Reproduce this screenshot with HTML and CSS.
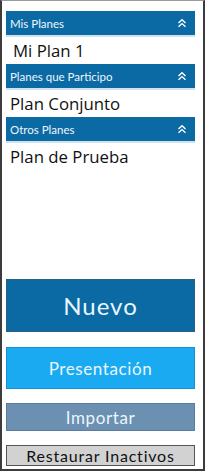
FILE: index.html
```html
<!DOCTYPE html>
<html lang="es">
<head>
<meta charset="utf-8">
<link rel="stylesheet" href="styles.css">
</head>
<body>
<div class="frame">
  <div class="section">
    <div class="header"><span>Mis Planes</span>
      <svg class="chev" viewBox="0 0 10 10" width="10" height="10"><path d="M1.5 5 L5 1.8 L8.5 5 M1.5 8.8 L5 5.6 L8.5 8.8" fill="none" stroke="#fff" stroke-width="1.4"/></svg>
    </div>
    <div class="item indent">Mi Plan 1</div>
  </div>
  <div class="section">
    <div class="header"><span>Planes que Participo</span>
      <svg class="chev" viewBox="0 0 10 10" width="10" height="10"><path d="M1.5 5 L5 1.8 L8.5 5 M1.5 8.8 L5 5.6 L8.5 8.8" fill="none" stroke="#fff" stroke-width="1.4"/></svg>
    </div>
    <div class="item">Plan Conjunto</div>
  </div>
  <div class="section">
    <div class="header"><span>Otros Planes</span>
      <svg class="chev" viewBox="0 0 10 10" width="10" height="10"><path d="M1.5 5 L5 1.8 L8.5 5 M1.5 8.8 L5 5.6 L8.5 8.8" fill="none" stroke="#fff" stroke-width="1.4"/></svg>
    </div>
    <div class="item">Plan de Prueba</div>
  </div>
  <div class="spacer"></div>
  <div class="btn nuevo">Nuevo</div>
  <div class="btn present">Presentación</div>
  <div class="btn importar">Importar</div>
  <div class="btn restaurar">Restaurar Inactivos</div>
</div>
</body>
</html>
```
FILE: styles.css
```css
* { box-sizing: border-box; }
html, body { margin: 0; padding: 0; background: #fff; }
.frame {
  width: 205px;
  height: 471px;
  border: 2px solid #3c3c3c;
  border-top: 1px solid #9a9a9a;
  padding: 10px 8px 3px 4px;
  display: flex;
  flex-direction: column;
  font-family: "Lato", "DejaVu Sans", sans-serif;
}
.section { display: flex; flex-direction: column; }
.header {
  background: #0b6aa4;
  color: #eef6fc;
  font-size: 11.5px;
  display: flex;
  align-items: center;
  justify-content: space-between;
  padding: 0 8px 0 4px;
  border-bottom: 2px solid #cfe3ef;
  height: 26px;
}
.chev { display: block; }
.item {
  height: 27px;
  font-family: "Open Sans", "Noto Sans", sans-serif;
  font-size: 16.8px;
  color: #111;
  display: flex;
  align-items: center;
  padding-left: 4px;
}
.item.indent { padding-left: 7px; }
.spacer { flex: 1; }
.btn {
  display: flex;
  align-items: center;
  justify-content: center;
  color: #eaf6fd;
}
.nuevo {
  height: 53px;
  background: #0b6aa4;
  font-size: 24px;
  letter-spacing: 1px;
  border: 1px solid #2a5f80;
  margin-bottom: 15px;
}
.present {
  height: 42px;
  background: #19aaf2;
  font-size: 17px;
  letter-spacing: 0.6px;
  border: 1px solid #1590d0;
  margin-bottom: 14px;
}
.importar {
  height: 28px;
  background: #6b90b2;
  font-size: 17px;
  letter-spacing: 0.6px;
  border: 1px solid #5a7c9a;
  margin-bottom: 14px;
}
.restaurar {
  height: 21px;
  background: #d2d2d2;
  color: #111;
  font-size: 16px;
  letter-spacing: 0.8px;
  border: 1px solid #555;
}
```
